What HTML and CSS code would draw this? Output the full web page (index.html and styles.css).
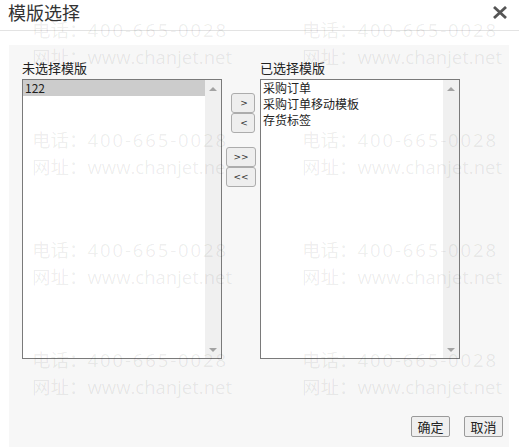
FILE: index.html
```html
<!DOCTYPE html>
<html lang="zh-CN">
<head>
<meta charset="utf-8">
<title>模版选择</title>
<link rel="stylesheet" href="styles.css">
</head>
<body>
<div class="dialog">
  <header class="titlebar">
    <h1 class="title">模版选择</h1>
    <button class="close" aria-label="关闭">
      <svg width="14" height="13" viewBox="0 0 14 13"><path d="M1 1 L13 12 M13 1 L1 12" stroke="#555" stroke-width="2.8" fill="none"/></svg>
    </button>
  </header>
  <div class="panel">
    <div class="columns">
      <div class="col">
        <div class="label">未选择模版</div>
        <div class="listbox">
          <div class="items">
            <div class="item selected">122</div>
          </div>
          <div class="scrollbar"><span class="arrow up"></span><span class="arrow down"></span></div>
        </div>
      </div>
      <div class="mid">
        <div class="group">
          <button class="mv single">&gt;</button>
          <button class="mv single">&lt;</button>
        </div>
        <div class="group">
          <button class="mv double">&gt;&gt;</button>
          <button class="mv double">&lt;&lt;</button>
        </div>
      </div>
      <div class="col">
        <div class="label">已选择模版</div>
        <div class="listbox">
          <div class="items">
            <div class="item">采购订单</div>
            <div class="item">采购订单移动模板</div>
            <div class="item">存货标签</div>
          </div>
          <div class="scrollbar"><span class="arrow up"></span><span class="arrow down"></span></div>
        </div>
      </div>
    </div>
    <div class="footer">
      <button class="btn">确定</button>
      <button class="btn">取消</button>
    </div>
  </div>
  <div class="watermark" aria-hidden="true">
    <div class="wm"><div class="l1">电话：<span class="num">400-665-0028</span></div><div>网址：www.chanjet.net</div></div>
    <div class="wm"><div class="l1">电话：<span class="num">400-665-0028</span></div><div>网址：www.chanjet.net</div></div>
    <div class="wm"><div class="l1">电话：<span class="num">400-665-0028</span></div><div>网址：www.chanjet.net</div></div>
    <div class="wm"><div class="l1">电话：<span class="num">400-665-0028</span></div><div>网址：www.chanjet.net</div></div>
    <div class="wm"><div class="l1">电话：<span class="num">400-665-0028</span></div><div>网址：www.chanjet.net</div></div>
    <div class="wm"><div class="l1">电话：<span class="num">400-665-0028</span></div><div>网址：www.chanjet.net</div></div>
    <div class="wm"><div class="l1">电话：<span class="num">400-665-0028</span></div><div>网址：www.chanjet.net</div></div>
    <div class="wm"><div class="l1">电话：<span class="num">400-665-0028</span></div><div>网址：www.chanjet.net</div></div>
  </div>
</div>
</body>
</html>
```
FILE: styles.css
```css
html, body {
  margin: 0;
  padding: 0;
  background: #ffffff;
  height: 100%;
  overflow: hidden;
}
body {
  font-family: "Noto Sans", "Noto Sans CJK SC", sans-serif;
  color: #222;
}
.dialog {
  position: relative;
  height: 100vh;
  display: flex;
  flex-direction: column;
  overflow: hidden;
}
.titlebar {
  height: 30px;
  border-bottom: 1px solid #e3e3e3;
  display: flex;
  justify-content: space-between;
  align-items: flex-start;
  flex: none;
}
.title {
  margin: 0;
  padding: 0 0 0 8px;
  font-family: "Noto Sans CJK SC", sans-serif;
  font-weight: normal;
  font-size: 18px;
  line-height: 24px;
  color: #333;
}
.close {
  margin: 6px 12px 0 0;
  padding: 0;
  border: 0;
  background: none;
  width: 14px;
  height: 13px;
  display: block;
}
.close svg { display: block; }
.panel {
  flex: 1;
  margin: 14px 10px 0 9px;
  background: #f7f7f7;
  padding: 14px 6px 0 13px;
  display: flex;
  flex-direction: column;
}
.columns {
  display: flex;
}
.col {
  width: 200px;
  display: flex;
  flex-direction: column;
}
.label {
  font-family: "Noto Sans CJK SC", sans-serif;
  font-size: 13px;
  line-height: 17px;
  margin-bottom: 3px;
  color: #222;
}
.listbox {
  height: 280px;
  box-sizing: border-box;
  border: 1px solid #7a7a7a;
  background: #fff;
  display: flex;
}
.items {
  flex: 1;
  font-family: "Noto Sans CJK SC", sans-serif;
  font-size: 12px;
  line-height: 16px;
  color: #222;
}
.item {
  padding: 0 2px;
}
.item.selected {
  background: #cccccc;
}
.scrollbar {
  width: 16px;
  background: #f0f0f0;
  display: flex;
  flex-direction: column;
  justify-content: space-between;
  align-items: center;
  padding: 7px 0 6px;
}
.arrow {
  width: 0;
  height: 0;
  border-left: 4px solid transparent;
  border-right: 4px solid transparent;
}
.arrow.up { border-bottom: 4px solid #a3a3a3; }
.arrow.down { border-top: 4px solid #a3a3a3; }
.mid {
  width: 38px;
  display: flex;
  flex-direction: column;
  align-items: center;
  padding-top: 34px;
  gap: 14px;
  position: relative;
  z-index: 2;
}
.group {
  display: flex;
  flex-direction: column;
  align-items: center;
}
.mv {
  height: 20px;
  padding: 0;
  margin: 0;
  box-sizing: border-box;
  border: 1px solid #acacac;
  border-radius: 3px;
  background: #eeeeee;
  font-family: "DejaVu Sans", sans-serif;
  font-size: 9px;
  color: #333;
}
.mv.single { width: 24px; margin-left: 3px; padding-left: 3px; }
.mv.double { width: 30px; }
.footer {
  margin-top: 57px;
  display: flex;
  justify-content: flex-end;
  gap: 14px;
  position: relative;
  z-index: 2;
}
.btn {
  width: 39px;
  height: 21px;
  padding: 0;
  box-sizing: border-box;
  border: 1px solid #9a9a9a;
  border-radius: 2px;
  background: #efefef;
  font-family: "Noto Sans CJK SC", sans-serif;
  font-size: 13px;
  line-height: 19px;
  color: #222;
}
.watermark {
  position: absolute;
  left: 32px;
  right: 0;
  top: 16px;
  bottom: 0;
  overflow: hidden;
  display: grid;
  grid-template-columns: 270px 270px;
  grid-auto-rows: 110px;
  pointer-events: none;
  z-index: 1;
  font-family: "Open Sans", "Noto Sans CJK SC", sans-serif;
  font-size: 18.5px;
  line-height: 27px;
  color: rgba(0, 0, 0, 0.075);
  white-space: nowrap;
}
.num { letter-spacing: 1.9px; }
```
